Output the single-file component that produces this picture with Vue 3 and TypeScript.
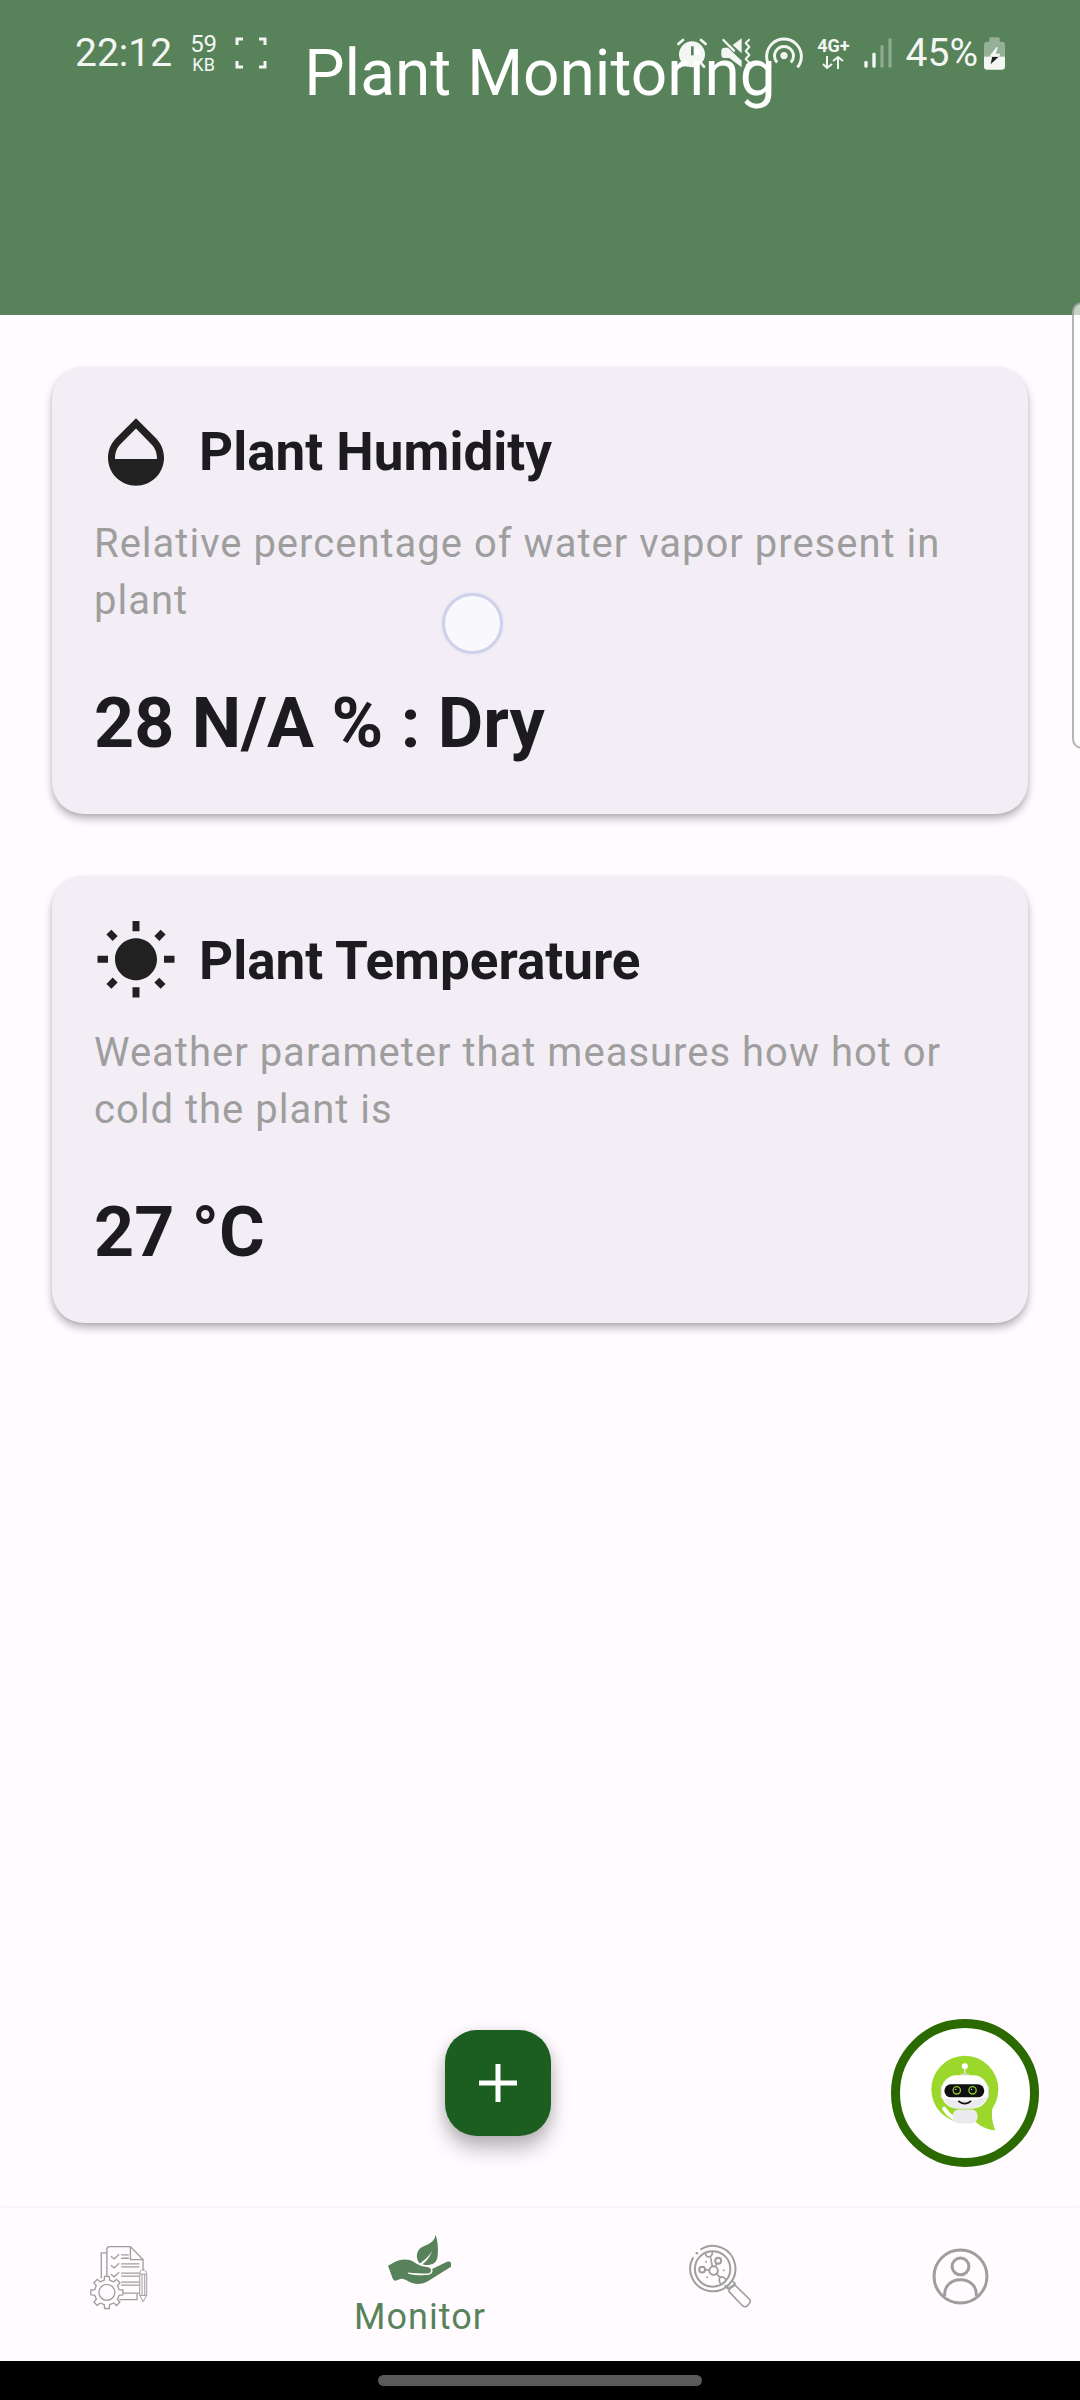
<script setup lang="ts">
interface Reading {
  id: string
  title: string
  description: string
  value: string
}

const readings: Reading[] = [
  {
    id: 'humidity',
    title: 'Plant Humidity',
    description: 'Relative percentage of water vapor present in plant',
    value: '28 N/A % : Dry',
  },
  {
    id: 'temperature',
    title: 'Plant Temperature',
    description: 'Weather parameter that measures how hot or cold the plant is',
    value: '27 °C',
  },
]

// Outline of a cog wheel with evenly spaced teeth.
function gearPath(cx: number, cy: number, outer: number, inner: number, teeth: number): string {
  const step = (Math.PI * 2) / teeth
  const points: string[] = []
  for (let i = 0; i < teeth; i++) {
    const a = i * step
    const corners: [number, number][] = [
      [inner, a - step * 0.27],
      [outer, a - step * 0.19],
      [outer, a + step * 0.19],
      [inner, a + step * 0.27],
    ]
    for (const [r, t] of corners) {
      points.push(`${(cx + r * Math.cos(t)).toFixed(1)} ${(cy + r * Math.sin(t)).toFixed(1)}`)
    }
  }
  return `M${points.join('L')}Z`
}

const gear = gearPath(112, 215, 49, 38, 8)
</script>

<template>
  <div class="screen">
    <header class="top">
      <h1 class="top-title">Plant Monitoring</h1>
      <div class="status">
        <div class="status-left">
          <span class="clock">22:12</span>
          <span class="rate"><span class="rate-num">59</span><span class="rate-unit">KB</span></span>
          <svg class="ic-frame" viewBox="0 0 32 32" fill="none" stroke="currentColor" stroke-width="3">
            <path d="M2 8V2H8M24 2H30V8M30 24V30H24M8 30H2V24" />
          </svg>
        </div>
        <div class="status-right">
          <svg class="ic-30" viewBox="50 53 90 90">
            <circle cx="95" cy="102" r="39" fill="currentColor" />
            <path d="M54 71L68 59M136 71L122 59M68 128L59 139M122 128L131 139" stroke="currentColor" stroke-width="8" stroke-linecap="round" />
            <path d="M96 78V105" stroke="#58835a" stroke-width="8" />
          </svg>
          <svg class="ic-30" viewBox="187 53 90 90" fill="none" stroke="currentColor">
            <path d="M188 92Q188 82 198 82H208L249 121V141L212 113H198Q188 113 188 103ZM222 74L249 54V99Z" fill="currentColor" stroke="none" />
            <path d="M194 59L226 91" stroke-width="7" stroke-linecap="round" />
            <path d="M273 57L261 68L272 80L261 92L272 104L261 116L272 127L262 137" stroke-width="6" stroke-linejoin="round" />
          </svg>
          <svg class="ic-hotspot" viewBox="317 46 116 96" fill="none" stroke="currentColor" stroke-width="9">
            <circle cx="375" cy="102" r="11" fill="currentColor" stroke="none" />
            <path d="M354 123A29 29 0 1 1 396 123M334 138A53 53 0 1 1 416 138" />
          </svg>
          <span class="network">
            <span class="network-name">4G+</span>
            <svg class="ic-arrows" viewBox="0 0 22 15" fill="none" stroke="currentColor" stroke-width="2">
              <path d="M5 1V13M1 9L5 13L10 9M16 14V2M11 6L16 2L21 6" />
            </svg>
          </span>
          <svg class="ic-signal" viewBox="608 53 84 90" fill="currentColor">
            <rect x="609" y="122" width="10" height="20" rx="4" />
            <rect x="633" y="97" width="10" height="45" rx="4" />
            <rect x="657" y="75" width="10" height="67" rx="4" opacity=".35" />
            <rect x="681" y="54" width="10" height="88" rx="4" opacity=".35" />
          </svg>
          <span class="battery">
            <span class="clock">45%</span>
            <svg class="ic-battery" viewBox="971 48 64 99" fill="currentColor">
              <path d="M987 62V53Q987 48 992 48H1014Q1019 48 1019 53V62H1025Q1035 62 1035 72V107H971V72Q971 62 981 62Z" opacity=".4" />
              <path d="M971 107H1035V137Q1035 147 1025 147H981Q971 147 971 137Z" />
              <path d="M1009 78L987 107H1018L1020 98H1007L1013 79Z" />
              <path d="M996 108H1015L991 130Z" fill="#1b1b1b" />
            </svg>
          </span>
        </div>
      </div>
    </header>

    <main class="content">
      <article v-for="reading in readings" :key="reading.id" class="card">
        <div class="card-head">
          <svg v-if="reading.id === 'humidity'" class="card-icon" viewBox="0 0 24 24" fill="currentColor">
            <path d="M17.66 8L12 2.35 6.34 8C4.78 9.56 4 11.64 4 13.64s.78 4.11 2.34 5.67 3.61 2.35 5.66 2.35 4.1-.79 5.66-2.35S20 15.64 20 13.64 19.22 9.56 17.66 8zM6 14c.01-2 .62-3.27 1.76-4.4L12 5.27l4.24 4.38C17.38 10.77 17.99 12 18 14H6z" />
          </svg>
          <svg v-else class="card-icon" viewBox="0 0 24 24" fill="currentColor">
            <path d="M6.76 4.84l-1.8-1.79-1.41 1.41 1.79 1.79 1.42-1.41zM4 10.5H1v2h3v-2zm9-9.95h-2V3.5h2V.55zm7.45 3.91l-1.41-1.41-1.79 1.79 1.41 1.41 1.79-1.79zm-3.21 13.7l1.79 1.8 1.41-1.41-1.8-1.79-1.4 1.4zM20 10.5v2h3v-2h-3zm-8-5c-3.31 0-6 2.69-6 6s2.69 6 6 6 6-2.69 6-6-2.69-6-6-6zm-1 16.95h2V19.5h-2v2.95zm-7.45-3.91l1.41 1.41 1.79-1.8-1.41-1.41-1.79 1.8z" />
          </svg>
          <h2 class="card-title">{{ reading.title }}</h2>
        </div>
        <p class="card-text">{{ reading.description }}</p>
        <p class="card-value">{{ reading.value }}</p>
      </article>
    </main>

    <div class="actions">
      <button class="add" type="button" aria-label="Add plant">
        <svg class="ic-plus" viewBox="0 0 38 38" stroke="currentColor" stroke-width="5"><path d="M19 0V38M0 19H38" /></svg>
      </button>
      <button class="chat" type="button" aria-label="Chat assistant">
        <svg class="ic-bot" viewBox="155 165 203 226">
          <circle cx="256" cy="267" r="100" fill="#9cd82b" />
          <path d="M344 305C331 335 338 368 347 389C320 388 298 375 284 360Z" fill="#9cd82b" />
          <path d="M256 200V222" stroke="#e8efdc" stroke-width="4" />
          <circle cx="256" cy="198" r="9" fill="#fff" />
          <path d="M240 226Q242 218 256 218T272 226Z" fill="#c9dba9" />
          <rect x="184" y="255" width="12" height="40" rx="6" fill="#d6dfcb" />
          <rect x="316" y="255" width="12" height="40" rx="6" fill="#d6dfcb" />
          <rect x="187" y="225" width="138" height="99" rx="44" fill="#fff" />
          <path d="M191 292C200 316 220 324 240 324H272C292 324 312 316 323 288C300 302 215 304 191 292Z" fill="#ececf0" />
          <rect x="195" y="252" width="119" height="39" rx="19" fill="#111" />
          <g fill="none" stroke="#8fc62b" stroke-width="4"><circle cx="232" cy="270" r="11" /><circle cx="279" cy="270" r="11" /></g>
          <g fill="#fff"><circle cx="229" cy="267" r="2" /><circle cx="276" cy="267" r="2" /></g>
          <path d="M238 303Q256 317 273 303" fill="none" stroke="#111" stroke-width="5" stroke-linecap="round" />
          <path d="M194 325L206 340L224 354" fill="none" stroke="#fff" stroke-width="12" stroke-linecap="round" />
          <rect x="220" y="327" width="74" height="42" rx="18" fill="#ebebef" />
        </svg>
      </button>
    </div>

    <nav class="tabs" aria-label="Main">
      <a class="tab" href="#tasks" aria-label="Tasks">
        <svg class="tab-icon" viewBox="58 72 190 190" fill="none" stroke="currentColor" stroke-width="4">
          <path d="M110 96H95V172M150 237H203V220M112 168V85Q112 77 120 77H183L221 116V148M183 77V116H221" />
          <path d="M124 106L134 114L149 100M124 133L134 141L149 127M124 160L134 168L149 154" />
          <path d="M155 102H178M155 112H178M155 129H210M155 138H210M155 157H210M155 166H210M155 184H210M155 193H210M155 217H210" />
          <path d="M211 160Q211 147 221 147T232 160V224L221 243L211 224ZM211 160H232M211 224H232M218 160V224M226 160V224" stroke-width="3" />
          <path :d="gear" fill="#fffbff" stroke-linejoin="round" />
          <circle cx="112" cy="215" r="24" />
        </svg>
      </a>
      <a class="tab tab-active" href="#monitor" aria-current="page">
        <svg class="tab-icon" viewBox="146 82 190 190" fill="currentColor">
          <path d="M286 102C284 126 263 130 246 139C226 150 226 175 239 189C254 178 266 167 276 151C268 171 258 183 247 191C262 197 286 194 291 175C296 156 294 118 286 102Z" />
          <path d="M143 196L166 183C182 175 206 174 220 184C236 194 243 199 264 200C277 202 274 219 263 219C243 219 222 218 203 216L204 220C225 225 248 225 265 224C275 222 280 213 276 206L321 184Q333 180 333 190V199L262 243C242 254 220 252 205 243C195 237 188 234 182 235L166 241Q160 241 157 234Z" />
        </svg>
        <span class="tab-label">Monitor</span>
      </a>
      <a class="tab" href="#diagnose" aria-label="Diagnose">
        <svg class="tab-icon" viewBox="55 74 192 192" fill="none" stroke="currentColor" stroke-width="6">
          <path d="M90 88A69 69 0 1 1 68 111" />
          <circle cx="127" cy="147" r="54" />
          <circle cx="130" cy="152" r="13" />
          <circle cx="95" cy="149" r="9" />
          <circle cx="144" cy="122" r="9" />
          <path d="M104 150H117M135 140L140 131M126 140L121 112M139 162L149 172M105 97Q106 112 118 110Q127 107 126 95M168 180Q158 166 149 174Q144 182 152 193" stroke-width="5" />
          <g fill="currentColor" stroke="none"><circle cx="79" cy="99" r="4" /><circle cx="107" cy="125" r="3" /><circle cx="161" cy="151" r="3" /><circle cx="110" cy="172" r="3" /></g>
          <path d="M164 196L173 207L187 199L196 192L187 184M177 209L195 196L240 240Q244 245 238 253L232 260Q225 265 218 259L177 216Z" stroke-width="5" stroke-linejoin="round" />
        </svg>
      </a>
      <a class="tab" href="#profile" aria-label="Profile">
        <svg class="tab-icon" viewBox="88 167 188 188" fill="none" stroke="currentColor" stroke-width="9">
          <circle cx="182" cy="261" r="79" />
          <circle cx="182" cy="231" r="25" />
          <path d="M135 320C132 290 154 271 182 271S232 290 229 320" />
        </svg>
      </a>
    </nav>

    <div class="system"><span class="system-pill"></span></div>

    <span class="edge-handle"></span>
    <span class="touch"></span>
  </div>
</template>

<style>
body {
  margin: 0;
  background: #fffbff;
}
</style>

<style scoped>
.screen {
  position: relative;
  display: flex;
  flex-direction: column;
  min-height: 100vh;
  overflow: hidden;
  background: #fffbff;
  color: #1c1b1f;
  font-family: Roboto, "Liberation Sans", sans-serif;
}
svg {
  display: block;
  flex: none;
}
h1,
h2,
p {
  margin: 0;
}
button {
  padding: 0;
  border: 0;
  display: flex;
  align-items: center;
  justify-content: center;
}

.top {
  position: relative;
  box-sizing: border-box;
  min-height: 315px;
  padding-top: 37px;
  background: #58835a;
  color: #fff;
}
.top-title {
  font-size: 64px;
  line-height: 74px;
  font-weight: 400;
  text-align: center;
}
.status {
  position: absolute;
  inset: 0 0 auto;
  height: 106px;
  padding: 0 75px;
  display: flex;
  justify-content: space-between;
  opacity: 0.93;
}
.status-left,
.status-right {
  display: flex;
  align-items: center;
}
.status-left {
  gap: 18px;
}
.status-right {
  gap: 14px;
}
.clock {
  font-size: 39px;
  line-height: 46px;
}
.rate,
.network {
  display: flex;
  flex-direction: column;
  align-items: center;
}
.rate-num {
  font-size: 24px;
  line-height: 24px;
}
.rate-unit {
  font-size: 18px;
  line-height: 18px;
}
.network-name {
  font-size: 18px;
  line-height: 18px;
  font-weight: 700;
}
.battery {
  display: flex;
  align-items: center;
  gap: 6px;
}
.ic-frame {
  width: 32px;
  height: 32px;
}
.ic-30 {
  width: 30px;
  height: 30px;
}
.ic-hotspot {
  width: 38px;
  height: 32px;
}
.ic-arrows {
  width: 22px;
  height: 15px;
}
.ic-signal {
  width: 28px;
  height: 30px;
}
.ic-battery {
  width: 21px;
  height: 33px;
}

.content {
  display: flex;
  flex-direction: column;
  gap: 62px;
  padding: 52px;
}
.card {
  padding: 43px 42px 42px;
  border-radius: 32px;
  background: #f3eef5;
  box-shadow: 0 5px 8px rgba(0, 0, 0, 0.28), 0 1px 3px rgba(0, 0, 0, 0.08);
}
.card-head {
  display: flex;
  align-items: center;
  gap: 21px;
}
.card-icon {
  width: 84px;
  height: 84px;
  color: #212121;
}
.card-title {
  font-size: 53px;
  line-height: 75px;
  font-weight: 700;
}
.card-text {
  margin-top: 21px;
  font-size: 40px;
  line-height: 57px;
  letter-spacing: 1px;
  color: #9e9e9e;
}
.card-value {
  margin-top: 45px;
  font-size: 70px;
  line-height: 98px;
  font-weight: 700;
}

.actions {
  margin-top: auto;
  display: grid;
  grid-template-columns: 1fr auto;
  align-items: center;
  padding: 0 41px 41px 104px;
}
.add {
  justify-self: center;
  width: 106px;
  height: 106px;
  margin-bottom: 20px;
  border-radius: 32px;
  background: #1b5e20;
  color: #fff;
  box-shadow: 0 14px 20px rgba(0, 0, 0, 0.24), 0 2px 14px rgba(0, 0, 0, 0.12);
}
.ic-plus {
  width: 38px;
  height: 38px;
}
.chat {
  width: 148px;
  height: 148px;
  border: 9px solid #2a6a00;
  border-radius: 50%;
  background: #fff;
}
.ic-bot {
  width: 68px;
  height: 76px;
}

.tabs {
  display: flex;
  height: 153px;
  box-shadow: 0 0 4px rgba(0, 0, 0, 0.08);
}
.tab {
  flex: 2;
  display: flex;
  flex-direction: column;
  align-items: center;
  padding-top: 37px;
  color: #9e9e9e;
  text-decoration: none;
}
.tab-active {
  flex: 3;
  padding-top: 20px;
  color: #58835a;
}
.tab-icon {
  width: 63px;
  height: 63px;
  overflow: visible;
}
.tab-label {
  font-size: 36px;
  line-height: 52px;
  letter-spacing: 1px;
}

.system {
  display: flex;
  align-items: center;
  justify-content: center;
  height: 39px;
  background: #000;
}
.system-pill {
  width: 30%;
  height: 11px;
  border-radius: 6px;
  background: #5a5a5a;
}

.edge-handle {
  position: absolute;
  top: 302px;
  right: -12px;
  box-sizing: border-box;
  width: 20px;
  height: 447px;
  border: 2px solid rgba(130, 130, 130, 0.6);
  border-radius: 12px;
  background: rgba(255, 255, 255, 0.65);
}
.touch {
  position: absolute;
  top: 593px;
  left: 442px;
  box-sizing: border-box;
  width: 61px;
  height: 61px;
  border: 3px solid #cfd0ea;
  border-radius: 50%;
  background: #f9f8fc;
  box-shadow: 0 0 3px #dcdcf4;
}
</style>
